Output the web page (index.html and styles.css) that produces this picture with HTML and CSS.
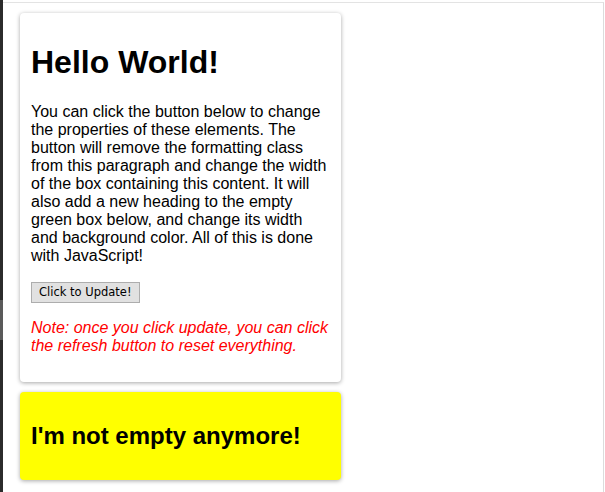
FILE: index.html
```html
<!DOCTYPE html>
<html>
<head>
<meta charset="utf-8">
<link rel="stylesheet" href="styles.css">
</head>
<body>
<div class="frame">
  <div class="sidebar"></div>
  <div class="viewport">
    <div class="page">
      <div class="card">
        <h1 class="title">Hello World!</h1>
        <p class="text">You can click the button below to change the properties of these elements. The button will remove the formatting class from this paragraph and change the width of the box containing this content. It will also add a new heading to the empty green box below, and change its width and background color. All of this is done with JavaScript!</p>
        <div class="actions"><button class="btn">Click to Update!</button></div>
        <p class="note">Note: once you click update, you can click the refresh button to reset everything.</p>
      </div>
      <div class="card card-yellow">
        <h2 class="subtitle">I'm not empty anymore!</h2>
      </div>
    </div>
  </div>
</div>
</body>
</html>
```

FILE: styles.css
```css
html, body {
  margin: 0;
  padding: 0;
  background: #fff;
  height: 100%;
}
body {
  font-family: "Liberation Sans", Arial, sans-serif;
  font-size: 16px;
  color: #000;
  overflow: hidden;
}
.frame {
  display: flex;
  height: 492px;
  padding-top: 2px;
  box-sizing: border-box;
}
.sidebar {
  width: 3px;
  margin-top: -2px;
  background: linear-gradient(#2b2b2b 0, #2b2b2b 300px, #5a5a5a 300px, #5a5a5a 340px, #2b2b2b 340px);
  flex: none;
}
.viewport {
  flex: 1;
  border-top: 1px solid #e3e3e3;
  border-right: 1px solid #dcdcdc;
  margin-right: 1px;
  box-sizing: border-box;
}
.page {
  padding: 10px 0 0 17px;
}
.card {
  width: 300px;
  padding: 10px 10px 10px 11px;
  margin-bottom: 10px;
  background: #fff;
  border-radius: 4px;
  box-shadow: 0 1px 4px rgba(0, 0, 0, 0.35);
}
.card-yellow {
  background: #ffff00;
}
.title {
  font-size: 32px;
  font-weight: bold;
  margin: 21.44px 0;
}
.text {
  margin: 17px 0 16px;
}
.actions {
  margin: 17px 0 16px;
}
.btn {
  font-family: "DejaVu Sans", "Open Sans", sans-serif;
  font-size: 11.5px;
  height: 21px;
  padding: 0 7px;
  background: #e1e1e1;
  border: 1px solid #adadad;
  border-radius: 0;
  color: #000;
}
.note {
  color: #ff0000;
  font-style: italic;
  margin: 16px 0 17px;
}
.subtitle {
  font-size: 24px;
  font-weight: bold;
  margin: 19.92px 0;
}
```
